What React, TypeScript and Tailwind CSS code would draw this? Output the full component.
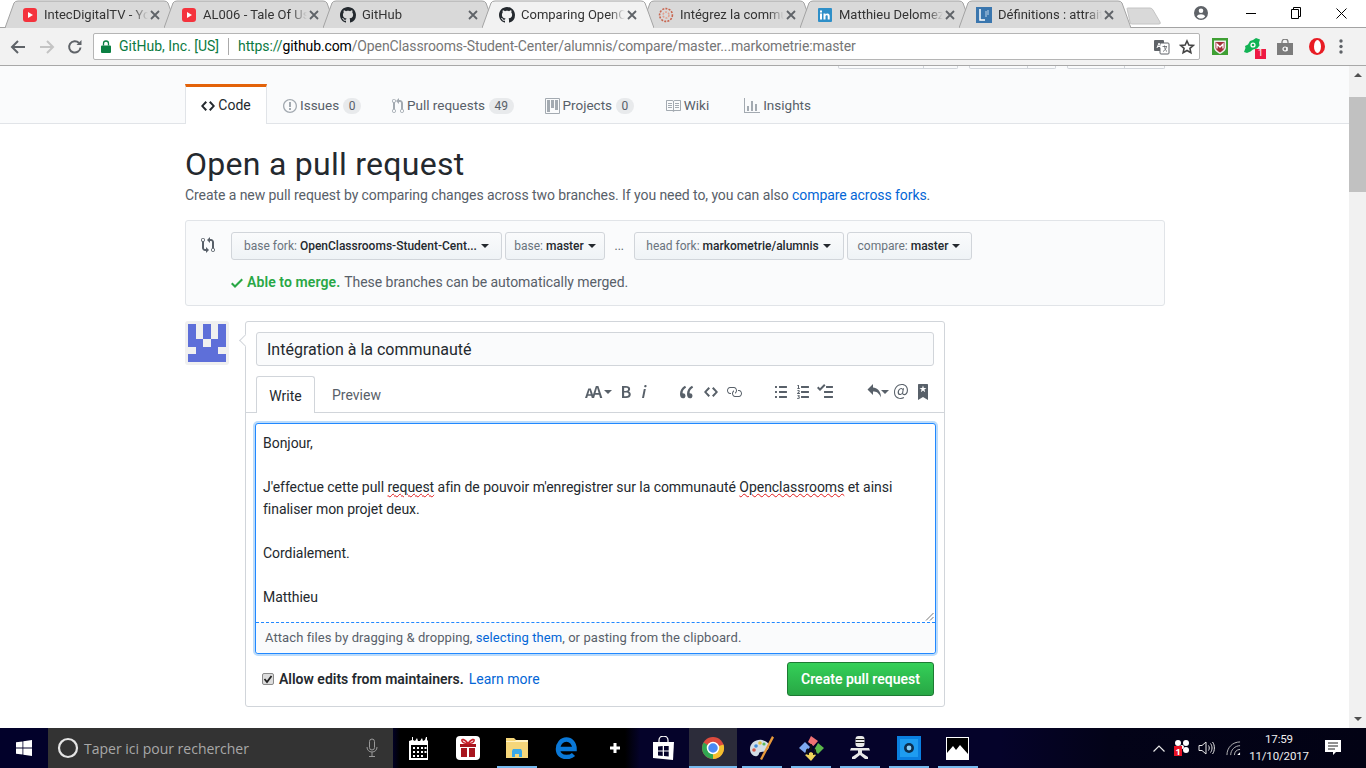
import React from "react";

const P = {
  github: "M8 0C3.58 0 0 3.58 0 8c0 3.54 2.29 6.53 5.47 7.59.4.07.55-.17.55-.38 0-.19-.01-.82-.01-1.49-2.01.37-2.53-.49-2.69-.94-.09-.23-.48-.94-.82-1.13-.28-.15-.68-.52-.01-.53.63-.01 1.08.58 1.23.82.72 1.21 1.87.87 2.33.66.07-.52.28-.87.51-1.07-1.78-.2-3.64-.89-3.64-3.95 0-.87.31-1.59.82-2.15-.08-.2-.36-1.02.08-2.12 0 0 .67-.21 2.2.82.64-.18 1.32-.27 2-.27.68 0 1.36.09 2 .27 1.53-1.04 2.2-.82 2.2-.82.44 1.1.16 1.92.08 2.12.51.56.82 1.27.82 2.15 0 3.07-1.87 3.75-3.65 3.95.29.25.54.73.54 1.48 0 1.07-.01 1.93-.01 2.2 0 .21.15.46.55.38A8.013 8.013 0 0 0 16 8c0-4.42-3.58-8-8-8z",
  code: "M9.5 3L8 4.5 11.5 8 8 11.5 9.5 13 14 8 9.5 3zm-5 0L0 8l4.5 5L6 11.5 2.5 8 6 4.5 4.5 3z",
  issue: "M7 2.3c3.14 0 5.7 2.56 5.7 5.7s-2.56 5.7-5.7 5.7A5.71 5.71 0 0 1 1.3 8c0-3.14 2.56-5.7 5.7-5.7zM7 1C3.14 1 0 4.14 0 8s3.14 7 7 7 7-3.14 7-7-3.14-7-7-7zm1 3H6v5h2V4zm0 6H6v2h2v-2z",
  pr: "M11 11.28V5c-.03-.78-.34-1.47-.94-2.06C9.46 2.35 8.78 2.03 8 2H7V0L4 3l3 3V4h1c.27.02.48.11.69.31.21.2.3.42.31.69v6.28A1.993 1.993 0 0 0 10 15a1.993 1.993 0 0 0 1-3.72zm-1 2.92c-.66 0-1.2-.55-1.2-1.2 0-.65.55-1.2 1.2-1.2.65 0 1.2.55 1.2 1.2 0 .65-.55 1.2-1.2 1.2zM4 3c0-1.11-.89-2-2-2a1.993 1.993 0 0 0-1 3.72v6.56A1.993 1.993 0 0 0 2 15a1.993 1.993 0 0 0 1-3.72V4.72c.59-.34 1-.98 1-1.72zm-.8 10c0 .66-.55 1.2-1.2 1.2-.65 0-1.2-.55-1.2-1.2 0-.65.55-1.2 1.2-1.2.65 0 1.2.55 1.2 1.2zM2 4.2C1.34 4.2.8 3.65.8 3c0-.65.55-1.2 1.2-1.2.65 0 1.2.55 1.2 1.2 0 .65-.55 1.2-1.2 1.2z",
  project: "M10 12h3V2h-3v10zm-4-2h3V2H6v8zm-4 4h3V2H2v12zm-1 1h13V1H1v14zM14 0H1a1 1 0 0 0-1 1v14a1 1 0 0 0 1 1h13a1 1 0 0 0 1-1V1a1 1 0 0 0-1-1z",
  book: "M3 5h4v1H3V5zm0 3h4V7H3v1zm0 2h4V9H3v1zm11-5h-4v1h4V5zm0 2h-4v1h4V7zm0 2h-4v1h4V9zm2-6v9c0 .55-.45 1-1 1H9.5l-1 1-1-1H2c-.55 0-1-.45-1-1V3c0-.55.45-1 1-1h5.5l1 1 1-1H15c.55 0 1 .45 1 1zm-8 .5L7.5 3H2v9h6V3.5zm7-.5H9.5l-.5.5V12h6V3z",
  graph: "M16 14v1H0V0h1v14h15zM5 13H3V8h2v5zm4 0H7V3h2v10zm4 0h-2V6h2v7z",
  compare: "M5 12H4c-.27-.02-.48-.11-.69-.31-.21-.2-.3-.42-.31-.69V4.72A1.993 1.993 0 0 0 2 1a1.993 1.993 0 0 0-1 3.72V11c.03.78.34 1.47.94 2.06.6.59 1.28.91 2.06.94h1v2l3-3-3-3v2zM2 1.8c.66 0 1.2.55 1.2 1.2 0 .65-.55 1.2-1.2 1.2C1.34 4.2.8 3.65.8 3c0-.65.55-1.2 1.2-1.2zm11 9.48V5c-.03-.78-.34-1.47-.94-2.06-.6-.59-1.28-.91-2.06-.94H9V0L6 3l3 3V4h1c.27.02.48.11.69.31.21.2.3.42.31.69v6.28A1.993 1.993 0 0 0 12 15a1.993 1.993 0 0 0 1-3.72zm-1 2.92c-.66 0-1.2-.55-1.2-1.2 0-.65.55-1.2 1.2-1.2.65 0 1.2.55 1.2 1.2 0 .65-.55 1.2-1.2 1.2z",
  check: "M12 5l-8 8-4-4 1.5-1.5L4 10l6.5-6.5L12 5z",
  size: "M13.62 9.08L12.1 3.66h-.06l-1.5 5.42h3.08zM5.7 10.13S4.68 6.52 4.53 6.02h-.08l-1.13 4.11H5.7zM17.31 14h-2.25l-.95-3.25h-4.07L9.09 14H6.84l-.69-2.33H2.87L2.17 14H0l3.3-9.59h2.5l2.17 6.34L10.86 2h2.52l3.94 12h-.01z",
  bold: "M1 2h3.83c2.48 0 4.3.75 4.3 2.95 0 1.14-.63 2.23-1.67 2.61v.06c1.33.3 2.3 1.23 2.3 2.86 0 2.39-1.97 3.52-4.61 3.52H1V2zm3.66 4.95c1.67 0 2.38-.66 2.38-1.69 0-1.17-.78-1.61-2.34-1.61H3.13v3.3h1.53zm.27 5.39c1.77 0 2.75-.64 2.75-1.98 0-1.27-.95-1.81-2.75-1.81h-1.8v3.8h1.8v-.01z",
  italic: "M2.81 5h1.98L3 14H1l1.81-9zm.36-2.7c0-.7.58-1.3 1.33-1.3.56 0 1.13.38 1.13 1.03 0 .75-.59 1.3-1.33 1.3-.58 0-1.13-.38-1.13-1.03z",
  quote: "M6.16 3.5C3.73 5.06 2.55 6.67 2.55 9.36c.16-.05.3-.05.44-.05 1.27 0 2.5.86 2.5 2.41 0 1.61-1.03 2.61-2.5 2.61-1.9 0-2.99-1.52-2.99-4.25 0-3.8 1.75-6.53 5.02-8.42L6.16 3.5zm7 0c-2.43 1.56-3.61 3.17-3.61 5.86.16-.05.3-.05.44-.05 1.27 0 2.5.86 2.5 2.41 0 1.61-1.03 2.61-2.5 2.61-1.89 0-2.98-1.52-2.98-4.25 0-3.8 1.75-6.53 5.02-8.42l1.14 1.84h-.01z",
  link: "M4 9h1v1H4c-1.5 0-3-1.69-3-3.5S2.55 3 4 3h4c1.45 0 3 1.69 3 3.5 0 1.41-.91 2.72-2 3.25V8.59c.58-.45 1-1.27 1-2.09C10 5.22 8.98 4 8 4H4c-.98 0-2 1.22-2 2.5S3 9 4 9zm9-3h-1v1h1c1 0 2 1.22 2 2.5S13.98 12 13 12H9c-.98 0-2-1.22-2-2.5 0-.83.42-1.64 1-2.09V6.25c-1.09.53-2 1.84-2 3.25C6 11.31 7.55 13 9 13h4c1.45 0 3-1.69 3-3.5S14.5 6 13 6z",
  ul: "M2 13c0 .59 0 1-.59 1H.59C0 14 0 13.59 0 13c0-.59 0-1 .59-1h.81c.59 0 .59.41.59 1H2zm2.59-9h6.81c.59 0 .59-.41.59-1 0-.59 0-1-.59-1H4.59C4 2 4 2.41 4 3c0 .59 0 1 .59 1zM1.41 7H.59C0 7 0 7.41 0 8c0 .59 0 1 .59 1h.81c.59 0 .59-.41.59-1 0-.59 0-1-.59-1h.01zm0-5H.59C0 2 0 2.41 0 3c0 .59 0 1 .59 1h.81c.59 0 .59-.41.59-1 0-.59 0-1-.59-1h.01zm10 5H4.59C4 7 4 7.41 4 8c0 .59 0 1 .59 1h6.81c.59 0 .59-.41.59-1 0-.59 0-1-.59-1h.01zm0 5H4.59C4 12 4 12.41 4 13c0 .59 0 1 .59 1h6.81c.59 0 .59-.41.59-1 0-.59 0-1-.59-1h.01z",
  ol: "M12 12.99c0 .589 0 .998-.59.998H4.597c-.59 0-.59-.41-.59-.999 0-.59 0-.999.59-.999H11.4c.59 0 .59.41.59 1H12zM4.596 3.996H11.4c.59 0 .59-.41.59-1 0-.589 0-.999-.59-.999H4.596c-.59 0-.59.41-.59 1 0 .589 0 .999.59.999zM11.4 6.994H4.596c-.59 0-.59.41-.59 1 0 .589 0 .999.59.999H11.4c.59 0 .59-.41.59-1 0-.59 0-.999-.59-.999zM2.008 1h-.72C.99 1.19.69 1.25.25 1.34V2h.75v2.138H.17v.859h2.837v-.86h-.999V1zm.25 8.123c-.17 0-.45.03-.66.06.53-.56 1.14-1.249 1.14-1.888-.02-.78-.56-1.299-1.36-1.299-.589 0-.968.2-1.378.64l.58.579c.19-.19.38-.38.639-.38.28 0 .48.16.48.52 0 .53-.77 1.199-1.699 2.058v.58h2.998l-.09-.88h-.66l.01.01zm-.08 3.777v-.03c.44-.19.64-.47.64-.859 0-.7-.56-1.11-1.44-1.11-.479 0-.888.19-1.278.52l.55.64c.25-.2.44-.31.689-.31.27 0 .42.13.42.36 0 .27-.2.44-.86.44v.749c.83 0 .98.17.98.47 0 .25-.23.38-.58.38-.28 0-.56-.14-.81-.38l-.479.659c.3.36.77.56 1.409.56.83 0 1.529-.41 1.529-1.16 0-.5-.31-.809-.77-.939v.01z",
  task: "M15.41 9H7.59C7 9 7 8.59 7 8c0-.59 0-1 .59-1h7.81c.59 0 .59.41.59 1 0 .59 0 1-.59 1h.01zM9.59 4C9 4 9 3.59 9 3c0-.59 0-1 .59-1h5.81c.59 0 .59.41.59 1 0 .59 0 1-.59 1H9.59zM0 3.91l1.41-1.3L3 4.2 7.09 0 8.5 1.41 3 6.91l-3-3zM7.59 12h7.81c.59 0 .59.41.59 1 0 .59 0 1-.59 1H7.59C7 14 7 13.59 7 13c0-.59 0-1 .59-1z",
  reply: "M6 3.5c3.92.44 8 3.125 8 10-2.312-5.062-4.75-6-8-6V11L.5 5.5 6 0v3.5z",
  mention: "M6.58 15c1.25 0 2.52-.31 3.56-.94l-.42-.94c-.84.52-1.89.83-3.03.83-3.23 0-5.64-2.08-5.64-5.72 0-4.37 3.23-7.18 6.58-7.18 3.45 0 5.22 2.19 5.22 5.2 0 2.39-1.34 3.86-2.5 3.86-1.05 0-1.36-.73-1.05-2.19l.73-3.75H8.98l-.11.72c-.41-.63-.94-.83-1.56-.83-2.19 0-3.66 2.39-3.66 4.38 0 1.67.94 2.61 2.3 2.61.84 0 1.67-.53 2.3-1.25.11.94.94 1.45 1.98 1.45 1.67 0 3.77-1.67 3.77-5C14 2.61 11.59 0 7.83 0 3.66 0 0 3.33 0 8.33 0 12.71 2.83 15 6.58 15zm-.31-5c-.73 0-1.36-.52-1.36-1.67 0-1.45.94-3.22 2.41-3.22.52 0 .84.2 1.25.83l-.52 3.02c-.63.73-1.25 1.04-1.78 1.04z",
  bookmark: "M9 0H1C.27 0 0 .27 0 1v15l5-3.09L10 16V1c0-.73-.27-1-1-1zm-.78 4.25L6.36 5.61l.72 2.16c.06.22-.02.28-.2.17L5 6.6 3.12 7.94c-.19.11-.25.05-.2-.17l.72-2.16-1.86-1.36c-.17-.16-.14-.23.09-.23l2.3-.03.7-2.16h.25l.7 2.16 2.3.03c.23 0 .27.08.09.23h.01z",
};

function Oct({ d, w = 16, h = 16, vb = 16, color = "currentColor", className = "" }: { d: string; w?: number; h?: number; vb?: number; color?: string; className?: string }) {
  return (
    <svg width={w} height={h} viewBox={`0 0 ${vb} 16`} className={"shrink-0 " + className} fill={color}>
      <path fillRule="evenodd" d={d} />
    </svg>
  );
}

function Caret({ className = "ml-[4px] border-t-[#24292e]" }: { className?: string }) {
  return <span className={"inline-block h-0 w-0 shrink-0 border-x-[4px] border-t-[4px] border-x-transparent " + className} />;
}

function TabIcon({ kind }: { kind: string }) {
  if (kind === "yt")
    return (
      <svg width="14" height="14" viewBox="0 0 14 14" className="shrink-0">
        <rect width="14" height="14" rx="3" fill="#f4333d" />
        <path d="M5 4l5 3-5 3z" fill="#fff" />
      </svg>
    );
  if (kind === "gh") return <Oct d={P.github} w={16} h={16} color="#24292e" />;
  if (kind === "oc")
    return (
      <svg width="16" height="16" viewBox="0 0 16 16" className="shrink-0" fill="none" stroke="#c8654f" strokeWidth="1.6" strokeDasharray="2 1.2">
        <circle cx="8" cy="8" r="6.4" />
        <circle cx="8" cy="8" r="3" stroke="#e2a08e" />
      </svg>
    );
  if (kind === "in")
    return (
      <svg width="14" height="14" viewBox="0 0 14 14" className="shrink-0">
        <rect width="14" height="14" rx="1" fill="#2e8fc8" />
        <rect x="2" y="5.5" width="2" height="6" fill="#fff" />
        <rect x="2" y="2.5" width="2" height="2" fill="#fff" />
        <path d="M5.5 5.5h2v1c.5-.8 1.2-1.1 2-1.1 1.5 0 2.2 1 2.2 2.6v3.5h-2V8.5c0-.8-.3-1.3-1-1.3s-1.2.5-1.2 1.3v3h-2z" fill="#fff" />
      </svg>
    );
  return (
    <svg width="16" height="16" viewBox="0 0 16 16" className="shrink-0">
      <rect width="16" height="16" fill="#3a76ae" />
      <path d="M4 2v11h5" stroke="#fff" strokeWidth="1.5" fill="none" />
      <path d="M10 4v6M12 3v5" stroke="#bcd3e8" strokeWidth="1" />
    </svg>
  );
}

function ChromeTab({ title, icon, active }: { title: string; icon: string; active?: boolean }) {
  return (
    <div className={"relative h-[28px] w-[172px] shrink-0 -mr-[13px] " + (active ? "z-10" : "")}>
      <svg width="172" height="28" viewBox="0 0 172 28" className="absolute left-0 top-0">
        <path d="M0 28 L9 3 Q10 1 13 1 H159 Q162 1 163 3 L172 28" fill={active ? "#f2f2f2" : "#d9d9d9"} stroke="#a3a3a3" strokeWidth="1" />
      </svg>
      <div className="relative flex h-[28px] items-center pl-[17px] pr-[17px] pt-[1px]">
        <div className="flex w-[16px] justify-center">
          <TabIcon kind={icon} />
        </div>
        <div className="ml-[6px] w-[104px] overflow-hidden whitespace-nowrap text-[13px] text-[#333] [mask-image:linear-gradient(to_right,black_85%,transparent)]">
          {title}
        </div>
        <svg width="10" height="10" viewBox="0 0 10 10" className="ml-auto shrink-0" stroke="#5f6368" strokeWidth="1.8">
          <path d="M1 1l8 8M9 1l-8 8" />
        </svg>
      </div>
    </div>
  );
}

function BrowserChrome() {
  return (
    <div className="shrink-0">
      <div className="flex h-[28px] items-start bg-white pl-[5px] shadow-[inset_0_-1px_0_#a3a3a3]">
        <ChromeTab title="IntecDigitalTV - YouTube" icon="yt" />
        <ChromeTab title="AL006 - Tale Of Us" icon="yt" />
        <ChromeTab title="GitHub" icon="gh" />
        <ChromeTab title="Comparing OpenClassrooms" icon="gh" active />
        <ChromeTab title="Intégrez la communauté" icon="oc" />
        <ChromeTab title="Matthieu Delomez" icon="in" />
        <ChromeTab title="Définitions : attrait" icon="le" />
        <svg width="36" height="18" viewBox="0 0 36 18" className="ml-[8px] mt-[7px] shrink-0">
          <path d="M1 1.5 Q1 1 2 1 H24 Q26 1 27 3 L34 15 Q35 17 33 17 H6 Q4 17 4 15 Z" fill="#d9d9d9" stroke="#c4c4c4" />
        </svg>
        <div className="ml-auto flex h-[26px] items-center">
          <svg width="16" height="16" viewBox="0 0 16 16" fill="#5f6368" className="mr-[37px]">
            <path fillRule="evenodd" d="M8 1a7 7 0 1 0 0 14A7 7 0 0 0 8 1zm0 2.5a2.3 2.3 0 1 1 0 4.6 2.3 2.3 0 0 1 0-4.6zM3.8 11.5C4.5 10 6 9.3 8 9.3s3.5.7 4.2 2.2C11.2 12.8 9.7 13.6 8 13.6s-3.2-.8-4.2-2.1z" />
          </svg>
          <span className="mr-[35px] block h-[1px] w-[10px] bg-black" />
          <svg width="10" height="12" viewBox="0 0 10 12" fill="none" stroke="#000" className="mr-[35px]">
            <path d="M.5 2.5h7v9h-7zM2.5 2.5V.5h7v9H7.5" />
          </svg>
          <svg width="11" height="11" viewBox="0 0 11 11" stroke="#000" className="mr-[19px]">
            <path d="M.5.5l10 10M10.5.5l-10 10" />
          </svg>
        </div>
      </div>
      <div className="flex h-[38px] items-center border-b border-[#a8a8a8] bg-[#f2f2f2]">
        <svg width="16" height="14" viewBox="0 0 16 14" className="ml-[10px]" fill="none" stroke="#5f6368" strokeWidth="2">
          <path d="M15 7H2M8 1L2 7l6 6" />
        </svg>
        <svg width="16" height="14" viewBox="0 0 16 14" className="ml-[13px]" fill="none" stroke="#c4c4c4" strokeWidth="2">
          <path d="M1 7h13M8 1l6 6-6 6" />
        </svg>
        <svg width="16" height="16" viewBox="0 0 16 16" className="ml-[12px]" fill="none" stroke="#5f6368" strokeWidth="2">
          <path d="M13.5 8.5A5.7 5.7 0 1 1 12 4" />
          <path d="M14.5 1v5h-5z" fill="#5f6368" stroke="none" />
        </svg>
        <div className="ml-[10px] flex h-[27px] w-[1107px] items-center rounded-[2px] border border-[#b5b5b5] bg-white pl-[7px] text-[14px]">
          <svg width="10" height="13" viewBox="0 0 10 13" fill="#0b8043">
            <path d="M1 5.5h8a1 1 0 0 1 1 1V12a1 1 0 0 1-1 1H1a1 1 0 0 1-1-1V6.5a1 1 0 0 1 1-1z" />
            <path d="M2.5 5.5V3.5a2.5 2.5 0 0 1 5 0v2" fill="none" stroke="#0b8043" strokeWidth="1.3" />
          </svg>
          <span className="ml-[8px] whitespace-nowrap text-[#0b7a42]">GitHub, Inc. [US]</span>
          <span className="ml-[9px] mr-[9px] h-[17px] w-px bg-[#aaa]" />
          <span className="whitespace-nowrap tracking-[-0.12px]">
            <span className="text-[#0b7a42]">https://</span>
            <span className="text-black">github.com</span>
            <span className="text-[#767676]">/OpenClassrooms-Student-Center/alumnis/compare/master...markometrie:master</span>
          </span>
          <svg width="16" height="16" viewBox="0 0 16 16" className="ml-auto">
            <rect x="0" y="1" width="10" height="11" rx="1" fill="#5f6368" />
            <rect x="6" y="4" width="9" height="11" rx="1" fill="#fff" stroke="#5f6368" />
            <path d="M3 9l2-5 2 5M3.8 7.5h2.4" stroke="#fff" fill="none" strokeWidth="1" />
            <path d="M8.5 7.5h4.5M10.5 6.5c0 3 1 5 2.5 6M12.5 7.5c-.3 2-1.5 4-3.5 5" stroke="#5f6368" fill="none" strokeWidth=".8" />
          </svg>
          <svg width="16" height="16" viewBox="0 0 24 24" className="ml-[9px] mr-[4px]" fill="none" stroke="#444" strokeWidth="2.4">
            <path d="M12 3l2.8 6 6.5.7-4.900 4.300 1.400 6.500L12 17.200 6.200 20.500l1.400-6.500L2.700 9.700 9.200 9z" />
          </svg>
        </div>
        <svg width="16" height="17" viewBox="0 0 16 17" className="ml-[12px]">
          <rect width="16" height="17" fill="#3f9f33" />
          <path d="M2 2.5h12v7c0 3-3 5-6 6.500-3-1.500-6-3.500-6-6.500z" fill="#eee" />
          <path d="M3.5 4h9v5.500c0 2-2.500 3.800-4.500 5-2-1.200-4.500-3-4.500-5z" fill="#a3303a" />
          <path d="M5 10.5V6l3 3 3-3v4.500" stroke="#fff" strokeWidth="1.3" fill="none" />
        </svg>
        <div className="relative ml-[16px] h-[18px] w-[18px]">
          <svg width="17" height="15" viewBox="0 0 17 15" fill="#13b355">
            <path d="M12 0l4 1.5-1 3 .5 3-2.500 3-4 1-2.500 2L3 15l-3-1 1.500-4-.5-2 3-1.500L6 3l3-1z" />
            <circle cx="9" cy="7" r="2.6" fill="#fff" />
            <circle cx="9" cy="7" r="1.3" fill="#13b355" />
          </svg>
          <span className="absolute left-[11px] top-[11px] flex h-[10px] w-[11px] items-center justify-center bg-[#ee1943] text-[9px] leading-none text-white">1</span>
        </div>
        <svg width="16" height="16" viewBox="0 0 16 16" className="ml-[15px]" fill="#7c7c7c">
          <path d="M0 4h16v12H0z" />
          <path d="M5 4V3a3 3 0 0 1 6 0v1" fill="none" stroke="#7c7c7c" strokeWidth="1.3" />
          <circle cx="8" cy="10" r="2" fill="none" stroke="#fff" strokeWidth="1.2" />
          <path d="M10 8v4" stroke="#fff" strokeWidth="1.2" />
        </svg>
        <svg width="16" height="17" viewBox="0 0 16 17" className="ml-[16px]">
          <ellipse cx="8" cy="8.5" rx="8" ry="8.5" fill="#e81c24" />
          <ellipse cx="8.5" cy="8.5" rx="3.5" ry="6.5" fill="#fff" />
        </svg>
        <svg width="4" height="15" viewBox="0 0 4 15" fill="#5f6368" className="ml-[14px]">
          <circle cx="2" cy="2" r="1.7" />
          <circle cx="2" cy="7.5" r="1.7" />
          <circle cx="2" cy="13" r="1.7" />
        </svg>
      </div>
    </div>
  );
}

function RepoTab({ icon, w, vb, label, count, active, pr = "pr-[16px]" }: { icon: string; w: number; vb: number; label: string; count?: string; active?: boolean; pr?: string }) {
  return (
    <div
      className={
        active
          ? "relative -mb-px flex h-[40px] w-[82px] items-center justify-center gap-[3px] border-x border-[#e1e4e8] border-t-[3px] border-t-[#e36209] bg-white text-[14px] text-[#24292e]"
          : "flex h-[40px] items-center gap-[3px] pl-[16px] pt-[3px] text-[13.5px] text-[#586069] " + pr
      }
    >
      <Oct d={icon} w={w} h={16} vb={vb} color={active ? "#24292e" : "#a3aab1"} />
      <span>{label}</span>
      {count && <span className="ml-[1px] rounded-full bg-[#e8eaec] px-[5.5px] text-[12px] leading-[16px] text-[#586069]">{count}</span>}
    </div>
  );
}

function ForkBtn({ k, v, className }: { k: string; v: string; className: string }) {
  return (
    <div className={"flex h-[28px] shrink-0 items-center justify-center whitespace-nowrap rounded-[3px] border border-[#d1d5da] bg-gradient-to-b from-[#fafbfc] to-[#eff3f6] text-[12px] font-medium text-[#24292e] " + className}>
      <span className="font-normal text-[#6a737d]">{k}:&nbsp;</span>
      {v}
      <Caret />
    </div>
  );
}

function Tool({ d, w, vb, className = "" }: { d: string; w: number; vb: number; className?: string }) {
  return <Oct d={d} w={w} h={16} vb={vb} color="#586069" className={className} />;
}

function Page() {
  return (
    <div className="min-w-0 flex-1 overflow-hidden bg-white">
      <div className="h-[58px] border-b border-[#e1e4e8] bg-[#fafbfc]">
        <div className="ml-[185px] flex w-[980px] flex-col">
          <div className="flex h-[3px] justify-end gap-[11px]">
            <div className="flex h-[3px] w-[120px] justify-end rounded-b-[2px] border-x border-b border-[#d1d5da]"><div className="h-full w-[34px] border-l border-[#d1d5da]" /></div>
            <div className="flex h-[3px] w-[87px] justify-end rounded-b-[2px] border-x border-b border-[#d1d5da]"><div className="h-full w-[28px] border-l border-[#d1d5da]" /></div>
            <div className="flex h-[3px] w-[98px] justify-end rounded-b-[2px] border-x border-b border-[#d1d5da]"><div className="h-full w-[40px] border-l border-[#d1d5da]" /></div>
          </div>
          <div className="mt-[15px] flex">
            <RepoTab icon={P.code} w={14} vb={14} label="Code" active />
            <RepoTab icon={P.issue} w={14} vb={14} label="Issues" count="0" pr="pr-[15px]" />
            <RepoTab icon={P.pr} w={12} vb={12} label="Pull requests" count="49" pr="pr-[15px]" />
            <RepoTab icon={P.project} w={15} vb={15} label="Projects" count="0" pr="pr-[15px]" />
            <RepoTab icon={P.book} w={16} vb={16} label="Wiki" pr="pr-[19px]" />
            <RepoTab icon={P.graph} w={16} vb={16} label="Insights" />
          </div>
        </div>
      </div>
      <div className="ml-[185px] w-[980px]">
        <h1 className="mt-[20px] text-[32px] font-normal leading-[40px] tracking-[0.27px] text-[#24292e]">Open a pull request</h1>
        <p className="mt-[1px] text-[14px] leading-[21px] tracking-[-0.07px] text-[#586069]">
          Create a new pull request by comparing changes across two branches. If you need to, you can also <span className="text-[#0366d6]">compare across forks</span>.
        </p>
        <div className="mt-[14px] h-[86px] rounded-[3px] border border-[#e1e4e8] bg-[#fafbfc] pl-[15px] pt-[11px]">
          <div className="flex items-center">
            <Oct d={P.compare} w={14} h={16} vb={14} color="#586069" className="mb-[2px]" />
            <div className="ml-[16px] flex items-center gap-[3px]">
              <ForkBtn k="base fork" v="OpenClassrooms-Student-Cent..." className="w-[271px]" />
              <ForkBtn k="base" v="master" className="w-[100px]" />
              <span className="mx-[6.5px] text-[12px] text-[#586069]">...</span>
              <ForkBtn k="head fork" v="markometrie/alumnis" className="w-[210px]" />
              <ForkBtn k="compare" v="master" className="w-[125px]" />
            </div>
          </div>
          <div className="ml-[30px] mt-[12px] flex items-center text-[14px] leading-[21px] tracking-[-0.05px] text-[#586069]">
            <Oct d={P.check} w={12} h={16} vb={12} color="#28a745" className="mr-[4px]" />
            <span className="font-semibold tracking-[0.1px] text-[#28a745]">Able to merge.</span>
            <span className="ml-[4px]">These branches can be automatically merged.</span>
          </div>
        </div>
        <div className="mt-[15px] flex items-start">
          <div className="h-[44px] w-[44px] shrink-0 rounded-[3px] bg-[#f0f0f0] p-[3px]">
            <svg width="38" height="38" viewBox="0 0 5 5" shapeRendering="crispEdges" fill="#5e6fd9">
              <path d="M0 0h1v2H0zM2 0h1v2H2zM4 0h1v2H4zM0 2h2v1H0zM3 2h2v1H3zM1 3h3v1H1zM0 4h5v1H0z" />
            </svg>
          </div>
          <div className="relative ml-[16px] h-[386px] w-[700px] rounded-[3px] border border-[#d1d5da] bg-white">
            <div className="absolute -left-[5px] top-[14px] h-[9px] w-[9px] rotate-45 border-b border-l border-[#d1d5da] bg-white" />
            <div className="mx-[10px] mt-[10px] flex h-[34px] items-center rounded-[3px] border border-[#d1d5da] bg-[#fafbfc] pl-[10px] pt-[2px] text-[16px] text-[#24292e]">
              Intégration à la communauté
            </div>
            <div className="mt-[10px] flex h-[37px] items-end border-b border-[#d1d5da] pl-[10px] text-[14px]">
              <div className="-mb-px flex h-[37px] w-[59px] items-center justify-center rounded-t-[3px] border-x border-t border-[#d1d5da] bg-white pt-[3px] text-[#24292e]">Write</div>
              <div className="flex h-[36px] items-center pl-[17px] pt-[3px] text-[#586069]">Preview</div>
              <div className="ml-auto mr-[16px] flex h-[36px] items-center pb-[4px]">
                <Tool d={P.size} w={18} vb={18} />
                <Caret className="ml-[1px] border-t-[#586069]" />
                <Tool d={P.bold} w={10} vb={10} className="ml-[9px]" />
                <Tool d={P.italic} w={6} vb={6} className="ml-[10px]" />
                <Tool d={P.quote} w={14} vb={14} className="ml-[33px]" />
                <Tool d={P.code} w={14} vb={14} className="ml-[10px]" />
                <Tool d={P.link} w={16} vb={16} className="ml-[8px]" />
                <Tool d={P.ul} w={12} vb={12} className="ml-[33px]" />
                <Tool d={P.ol} w={12} vb={12} className="ml-[10px]" />
                <Tool d={P.task} w={16} vb={16} className="ml-[8px]" />
                <Tool d={P.reply} w={14} vb={14} className="ml-[34px]" />
                <Caret className="border-t-[#586069]" />
                <Tool d={P.mention} w={14} vb={14} className="ml-[5px]" />
                <Tool d={P.bookmark} w={10} vb={10} className="ml-[10px]" />
              </div>
            </div>
            <div className="relative ml-[9px] mr-[8px] mt-[10px] h-[231px] rounded-[3px] border border-[#2188ff] bg-white shadow-[0_0_0_2px_#bcdcfb]">
              <div className="h-[198px] px-[7px] pt-[8px] text-[14px] leading-[22px] tracking-[-0.04px] text-[#24292e]">
                <div>Bonjour,</div>
                <div className="h-[22px]" />
                <div>
                  J'effectue cette pull <span className="underline decoration-wavy decoration-[#e01b1b] decoration-1">request</span> afin de pouvoir m'enregistrer sur la communauté <span className="underline decoration-wavy decoration-[#e01b1b] decoration-1">Openclassrooms</span> et ainsi
                </div>
                <div>finaliser mon projet deux.</div>
                <div className="h-[22px]" />
                <div>Cordialement.</div>
                <div className="h-[22px]" />
                <div>Matthieu</div>
              </div>
              <svg width="9" height="9" viewBox="0 0 9 9" className="absolute bottom-[32px] right-[1px]" stroke="#777" fill="none">
                <path d="M1 8.5L8.5 1M5 8.5L8.5 5" />
              </svg>
              <div className="flex h-[31px] items-center rounded-b-[3px] border-t border-dashed border-[#2188ff] bg-[#fafbfc] pl-[9px] text-[13px] tracking-[0.08px] text-[#586069]">
                Attach files by dragging &amp; dropping,&nbsp;<span className="text-[#0366d6]">selecting them</span>, or pasting from the clipboard.
              </div>
            </div>
            <div className="mx-[10px] mt-[8px] flex items-center">
              <div className="ml-[6px] flex h-[12px] w-[12px] items-center justify-center rounded-[2px] border border-[#8a8a8a] bg-[#dcdcdc]">
                <svg width="10" height="10" viewBox="0 0 10 10" fill="none" stroke="#222" strokeWidth="1.8"><path d="M1.5 5l2.5 3 4.5-6" /></svg>
              </div>
              <span className="ml-[5px] pt-[1px] text-[14px] font-semibold text-[#24292e]">Allow edits from maintainers.</span>
              <span className="ml-[5px] pt-[1px] text-[14px] text-[#0366d6]">Learn more</span>
              <div className="ml-auto flex h-[34px] w-[147px] items-center justify-center rounded-[3px] border border-[#1d7a33] bg-gradient-to-b from-[#34d058] to-[#28a745] text-[14px] font-semibold text-white">
                Create pull request
              </div>
            </div>
          </div>
        </div>
      </div>
    </div>
  );
}

function Scrollbar() {
  return (
    <div className="flex w-[17px] shrink-0 flex-col items-center bg-[#f1f1f1]">
      <div className="mt-[7px] h-0 w-0 border-x-[4px] border-b-[4px] border-x-transparent border-b-[#505050]" />
      <div className="mt-[20px] h-[95px] w-[17px] bg-[#c1c1c1]" />
      <div className="mt-auto mb-[7px] h-0 w-0 border-x-[4px] border-t-[4px] border-x-transparent border-t-[#505050]" />
    </div>
  );
}

function Slot({ className = "w-[49px]", active, children }: { className?: string; active?: string; children: React.ReactNode }) {
  return (
    <div className={"relative flex h-[40px] shrink-0 items-center justify-center " + className}>
      {children}
      {active && <div className={"absolute bottom-0 h-[2px] bg-[#76b9ed] " + active} />}
    </div>
  );
}

const bar = "left-[5px] right-[4px]";

function Taskbar() {
  return (
    <div className="flex h-[40px] shrink-0 items-center bg-[linear-gradient(90deg,#02012a_0,#02012a_392px,#000_400px,#000_625px,#05032a_640px,#05032a_1000px,#030318_1110px,#020214_1366px)] [font-family:'Open_Sans',sans-serif]">
      <div className="flex h-[40px] w-[48px] shrink-0 items-center justify-center">
        <svg width="16" height="16" viewBox="0 0 16 16" fill="#fff">
          <path d="M0 2.3L6.5 1.4V7.6H0zM7.3 1.3L16 0V7.6H7.3zM0 8.4H6.5V14.6L0 13.7zM7.3 8.4H16V16L7.3 14.7z" />
        </svg>
      </div>
      <div className="flex h-[40px] w-[345px] shrink-0 items-center bg-[#333333] pl-[9px] text-[14px] text-[#a8a8a8]">
        <svg width="22" height="22" viewBox="0 0 22 22" fill="none" stroke="#e4e4e4" strokeWidth="2.2"><circle cx="11" cy="11" r="9" /></svg>
        <span className="ml-[5px]">Taper ici pour rechercher</span>
        <svg width="12" height="20" viewBox="0 0 12 20" fill="none" stroke="#9a9a9a" className="ml-auto mr-[15px]">
          <rect x="3.5" y="1" width="5" height="11" rx="2.5" />
          <path d="M1 9c0 3 2 5 5 5s5-2 5-5M6 14v4M3 18.5h6" />
        </svg>
      </div>
      <Slot className="ml-[2px] w-[48px]">
        <svg width="20" height="23" viewBox="0 0 20 23" fill="#fff">
          <path d="M0 4l3-1V0h1v3l2 1 2-3 1 3h2l2-3 1 3 2-1 1-3h1v3l1 1v19H0z" />
          <path d="M2 8h16v13H2z" fill="#000" />
          <path d="M4 10h2v2H4zM8 10h2v2H8zM12 10h2v2h-2zM15.5 10h2v2h-2zM4 14h2v2H4zM8 14h2v2H8zM12 14h2v2h-2zM15.5 14h2v2h-2zM4 18h2v2H4zM8 18h2v2H8zM12 18h2v2h-2z" />
        </svg>
      </Slot>
      <Slot>
        <svg width="24" height="24" viewBox="0 0 24 24">
          <rect width="24" height="24" rx="4" fill="#fff" />
          <path d="M4 8h16v3H4zM5 12h6v9H5zM13 12h6v9h-6z" fill="#a8151e" />
          <path d="M12 7.5C9 3 5 2.5 6 5s3 2.5 6 2.5c3 0 5 0 6-2.5s-3-2-6 2.5z" fill="none" stroke="#c8202a" strokeWidth="1.6" />
        </svg>
      </Slot>
      <Slot active={bar}>
        <svg width="22" height="20" viewBox="0 0 22 20">
          <path d="M0 0h8l2 2h12v18H0z" fill="#f5d67a" />
          <path d="M0 3h9l1-1H22v2H0z" fill="#fff3c4" />
          <path d="M6 19v-6l1-2h8l1 2v6h-3v-3H9v3z" fill="#3aa9e8" />
        </svg>
      </Slot>
      <Slot>
        <svg width="22" height="22" viewBox="0 0 22 22" fill="none" stroke="#0a78d7" strokeWidth="4.5">
          <path d="M3 12h16.5C19.5 6 15.5 2.5 11.5 2.5 6.5 2.5 3 7 3 12s3.5 8 8.5 8c3 0 5.5-1 7-2.5" />
        </svg>
      </Slot>
      <Slot>
        <svg width="12" height="12" viewBox="0 0 12 12" fill="#fff"><path d="M4.5 1h3v3.5H11v3H7.5V11h-3V7.5H1v-3h3.5z" /></svg>
      </Slot>
      <Slot>
        <svg width="21" height="24" viewBox="0 0 21 24" fill="#fff">
          <path d="M0 6h21l-1 18L0 22z" />
          <path d="M6 6V4a4 3.5 0 0 1 9 0v2" fill="none" stroke="#fff" strokeWidth="1.2" />
          <path d="M5 10.5l4.700-.5v4.500H5zM11 10h4.700v4.500H11zM5 15.500h4.700v4.500L5 19.500zM11 15.500h4.700v5L11 20z" fill="#05032a" />
        </svg>
      </Slot>
      <Slot className="ml-[1px] w-[48px] bg-[#2c2c3a]" active="left-0 right-0">
        <svg width="24" height="24" viewBox="0 0 24 24">
          <circle cx="12" cy="12" r="11" fill="#dd4b3e" />
          <path d="M12 12L22.5 8.5A11 11 0 0 1 12 23z" fill="#f3c02f" />
          <path d="M12 12L12 23A11 11 0 0 1 2.5 6.5z" fill="#31a752" />
          <circle cx="12" cy="12" r="5.5" fill="#4a8af4" stroke="#fff" strokeWidth="1.5" />
        </svg>
      </Slot>
      <Slot active={bar}>
        <svg width="26" height="26" viewBox="0 0 26 26">
          <path d="M13 5C7 4 1 8 1 14c0 5 4 8 7 7 3-1 1-4 4-4 4 0 8-2 8-6 0-3-3-5-7-6z" fill="#d2dde6" />
          <circle cx="7" cy="11" r="1.8" fill="#3e8ad6" />
          <circle cx="11" cy="8" r="1.8" fill="#e0c13c" />
          <circle cx="5" cy="15" r="1.8" fill="#d65b4a" />
          <circle cx="15" cy="9" r="1.6" fill="#5cb85c" />
          <path d="M23 1l2 1.5L13 25l-2-1z" fill="#e89a3b" />
        </svg>
      </Slot>
      <Slot active={bar}>
        <svg width="26" height="26" viewBox="0 0 26 26">
          <path d="M13 1l7 5-4.500 5L10 7z" fill="#ef7174" />
          <path d="M20 8l6 5-6 6-4-4z" fill="#5cb84a" />
          <path d="M7 7l5 5-5 6-6-5z" fill="#7ea8f0" />
          <path d="M13 17l5 3-5 6-6-6z" fill="#efd45c" />
          <path d="M13 9v6M10 14c-2 1-2 5 1 5M16 14c2 1 2 5-1 5" stroke="#111" strokeWidth="1.8" fill="none" />
        </svg>
      </Slot>
      <Slot active={bar}>
        <svg width="22" height="26" viewBox="0 0 22 26" fill="#e8e8e8">
          <rect x="6.5" y="1" width="9" height="11" rx="3" />
          <path d="M6.5 4.5h9M6.5 7.5h9" stroke="#111" strokeWidth="1" />
          <path d="M2 13h18l1 2.5H1zM9 15.5h4V18l6 4v2h-3l-5-4-5 4H3v-2l6-4z" />
        </svg>
      </Slot>
      <Slot active={bar}>
        <svg width="24" height="24" viewBox="0 0 24 24">
          <rect width="24" height="24" fill="#0a7fe0" />
          <rect x="3" y="3" width="18" height="18" fill="#1e9cf0" />
          <circle cx="12" cy="12" r="5" fill="#0c2f4d" />
          <circle cx="12" cy="12" r="2.4" fill="#8fd0f5" />
        </svg>
      </Slot>
      <Slot active={bar}>
        <svg width="23" height="23" viewBox="0 0 23 23">
          <rect x=".5" y=".5" width="22" height="22" fill="#000" stroke="#fff" />
          <path d="M1 22V16l6-7 3 4 4-5 8 9v5z" fill="#fff" />
        </svg>
      </Slot>
      <div className="ml-auto flex h-[40px] items-center pr-[25px] text-[#f0f0f0]">
        <svg width="12" height="7" viewBox="0 0 12 7" fill="none" stroke="#e8e8e8" strokeWidth="1.2"><path d="M.5 6.5L6 1l5.500 5.500" /></svg>
        <div className="relative ml-[9px] h-[18px] w-[16px]">
          <svg width="16" height="18" viewBox="0 0 16 18" fill="#fff">
            <circle cx="4" cy="4" r="3" /><circle cx="12" cy="4" r="3" /><circle cx="12" cy="11" r="3" /><circle cx="8" cy="8" r="2" />
          </svg>
          <span className="absolute left-0 top-[7px] flex h-[10px] w-[8px] items-center justify-center bg-[#e81123] text-[9px] font-bold leading-none text-white">1</span>
        </div>
        <svg width="17" height="16" viewBox="0 0 17 16" fill="none" stroke="#e8e8e8" className="ml-[8px]">
          <path d="M1 5.5h3L8 2v12l-4-3.500H1zM10.500 5.500c1 1.500 1 3.500 0 5M12.500 3.500c2 2.500 2 6.500 0 9M14.500 2c2.500 3 2.500 9 0 12" />
        </svg>
        <svg width="15" height="15" viewBox="0 0 16 16" fill="none" stroke="#bdbdbd" className="ml-[11px]">
          <path d="M1 15C1 7 7 1 15 1M5 15c0-5.500 4.500-10 10-10M9 15c0-3.500 2.500-6 6-6" />
          <path d="M12 15h3v-3z" fill="#fff" stroke="none" />
        </svg>
        <div className="ml-[7px] flex w-[62px] flex-col items-center text-[11.5px] tracking-[-0.15px] [font-family:Roboto,sans-serif]">
          <span className="h-[17px] leading-[17px]">17:59</span>
          <span className="h-[17px] leading-[17px]">11/10/2017</span>
        </div>
        <svg width="16" height="17" viewBox="0 0 16 17" fill="#fff" className="ml-[15px]">
          <path d="M0 0h16v12h-5l-3 3v-3H0z" />
          <path d="M3 3h10M3 6h10M3 9h7" stroke="#222" />
        </svg>
      </div>
    </div>
  );
}

export default function App() {
  return (
    <div className="flex h-[768px] w-[1366px] flex-col overflow-hidden bg-white [font-family:Roboto,'Liberation_Sans',sans-serif]">
      <BrowserChrome />
      <div className="flex h-[662px] min-h-0">
        <Page />
        <Scrollbar />
      </div>
      <Taskbar />
    </div>
  );
}
